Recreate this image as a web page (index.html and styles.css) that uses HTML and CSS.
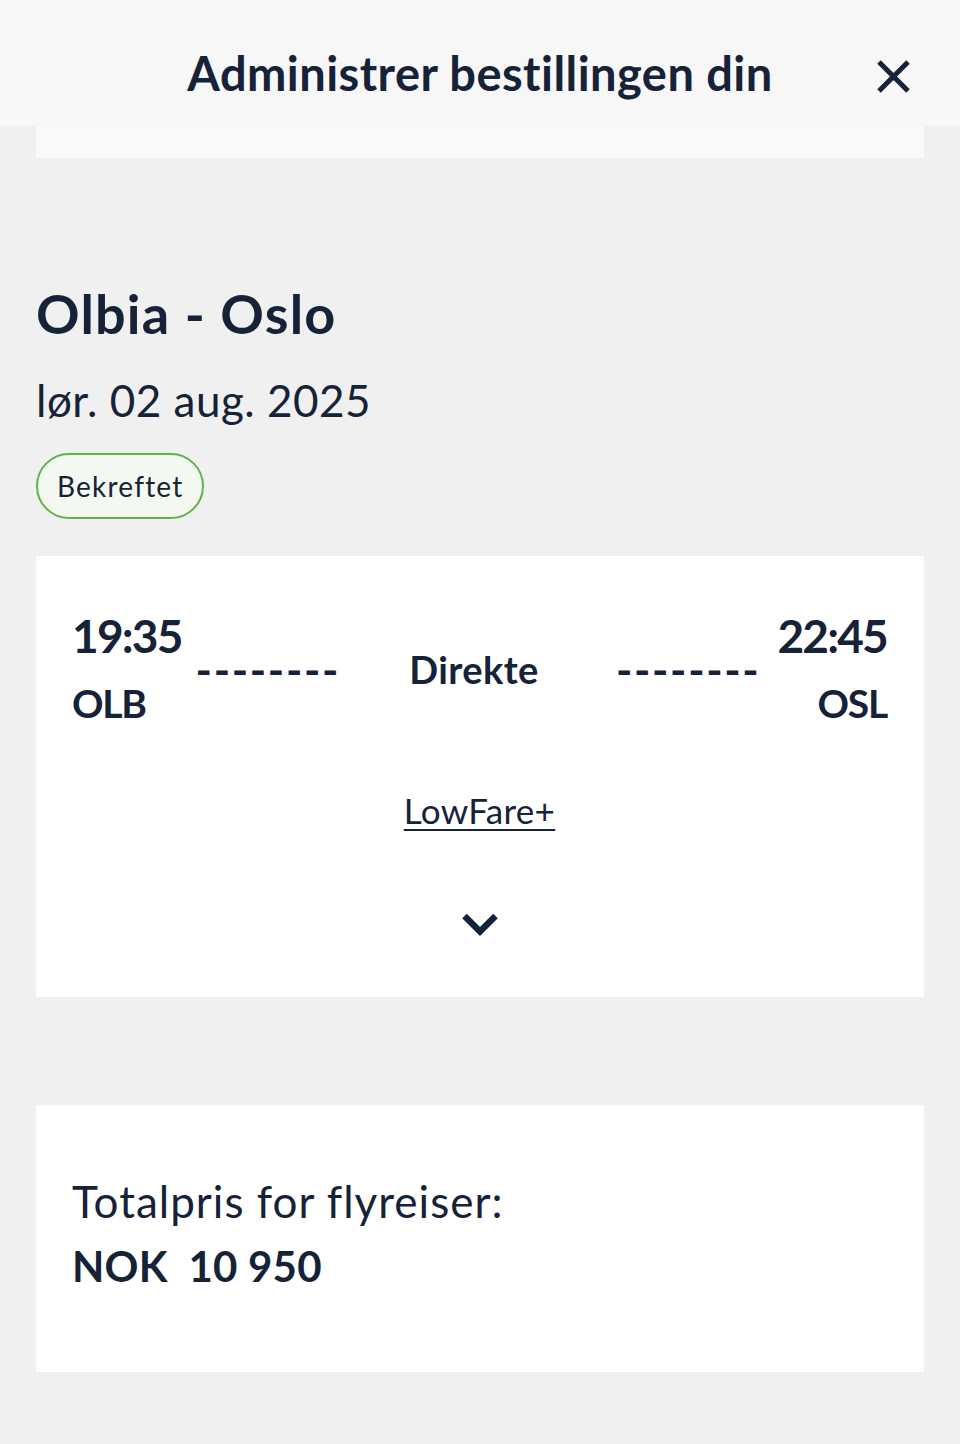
FILE: index.html
```html
<!DOCTYPE html>
<html lang="no">
<head>
  <meta charset="UTF-8">
  <meta name="viewport" content="width=device-width, initial-scale=1.0">
  <title>Administrer bestillingen din</title>
  <link rel="stylesheet" href="styles.css">
</head>
<body>
  <header class="topbar">
    <h1>Administrer bestillingen din</h1>
    <button class="close" aria-label="Lukk">
      <svg width="33" height="33" viewBox="0 0 33 33"><path d="M2 2 L31 31 M31 2 L2 31" stroke="#152238" stroke-width="5" fill="none"/></svg>
    </button>
  </header>

  <main class="page">
    <div class="card card-top"></div>

    <section class="trip">
      <h2>Olbia - Oslo</h2>
      <p class="date">lør. 02 aug. 2025</p>
      <span class="badge">Bekreftet</span>
    </section>

    <!-- Flyvning -->
    <div class="card flight">
      <div class="route">
        <div class="stop">
          <div class="time">19:35</div>
          <div class="code">OLB</div>
        </div>
        <div class="dash dash-left">--------</div>
        <div class="direct">Direkte</div>
        <div class="dash dash-right">--------</div>
        <div class="stop right">
          <div class="time">22:45</div>
          <div class="code">OSL</div>
        </div>
      </div>
      <a class="fare" href="#">LowFare+</a>
      <div class="chevron">
        <svg width="36" height="25" viewBox="0 0 36 25"><path d="M2.5 3 L18 18.5 L33.5 3" stroke="#152238" stroke-width="6.5" fill="none"/></svg>
      </div>
    </div>

    <!-- Totalpris -->
    <div class="card total">
      <p class="total-label">Totalpris for flyreiser:</p>
      <p class="total-price">NOK&nbsp; 10 950</p>
    </div>
  </main>
</body>
</html>
```

FILE: styles.css
```css
body {
  font-family: Lato, "Open Sans", Arial, sans-serif;
  margin: 0;
  background-color: #f0f0f0;
  color: #152238;
}
.topbar {
  position: relative;
  z-index: 2;
  height: 126px;
  box-sizing: border-box;
  padding-top: 45px;
  background-color: #f7f7f7;
  display: flex;
  justify-content: center;
}
.topbar h1 {
  margin: 0;
  font-size: 47px;
  font-weight: 700;
  line-height: 1.2;
  letter-spacing: 0.45px;
}
.close {
  position: absolute;
  right: 50px;
  top: 60px;
  border: none;
  background: none;
  padding: 0;
  width: 33px;
  height: 33px;
  line-height: 0;
}
.page {
  padding: 0 36px 60px;
}
.card {
  background: #ffffff;
}
.card-top {
  height: 32px;
  background: #f9f9f9;
}
.trip {
  padding-top: 124px;
  display: flex;
  flex-direction: column;
  align-items: flex-start;
}
.trip h2 {
  margin: 0;
  font-size: 54px;
  font-weight: 700;
  line-height: 64px;
  letter-spacing: 1.2px;
}
.date {
  margin: 27px 0 0;
  font-size: 44px;
  line-height: 54px;
  letter-spacing: 0.5px;
}
.badge {
  margin-top: 26px;
  padding: 0 19px;
  height: 66px;
  box-sizing: border-box;
  line-height: 62px;
  border: 2px solid #5cb544;
  border-radius: 34px;
  background: #f3f9f1;
  font-size: 28px;
  letter-spacing: 1.2px;
}
.flight {
  margin-top: 37px;
  height: 441px;
  padding: 53px 37px 0 36px;
  box-sizing: border-box;
  display: flex;
  flex-direction: column;
  align-items: center;
}
.route {
  width: 100%;
  display: flex;
  align-items: center;
}
.time {
  font-size: 46px;
  font-weight: 700;
  line-height: 54px;
  letter-spacing: -1.8px;
}
.code {
  margin-top: 14px;
  font-size: 39px;
  font-weight: 700;
  line-height: 52px;
  letter-spacing: -1.2px;
}
.stop.right {
  text-align: right;
}
.dash {
  font-size: 44px;
  font-weight: 700;
  line-height: 46px;
  letter-spacing: 1.65px;
}
.dash-left {
  margin-left: 14px;
}
.dash-right {
  margin-right: 17px;
}
.direct {
  flex: 1;
  text-align: center;
  font-size: 38px;
  font-weight: 700;
  line-height: 46px;
  letter-spacing: 0.4px;
  padding-right: 8px;
}
.fare {
  margin-top: 60px;
  color: #152238;
  font-size: 35px;
  line-height: 42px;
  letter-spacing: 0.3px;
  text-underline-offset: 5px;
  text-decoration-thickness: 2px;
}
.chevron {
  margin-top: 82px;
  line-height: 0;
}
.total {
  margin-top: 108px;
  height: 267px;
  padding: 65px 36px 0;
  box-sizing: border-box;
}
.total-label {
  margin: 0;
  font-size: 44px;
  line-height: 62px;
  letter-spacing: 1px;
}
.total-price {
  margin: 2px 0 0;
  font-size: 42px;
  font-weight: 700;
  line-height: 64px;
  letter-spacing: 0.2px;
}
```
